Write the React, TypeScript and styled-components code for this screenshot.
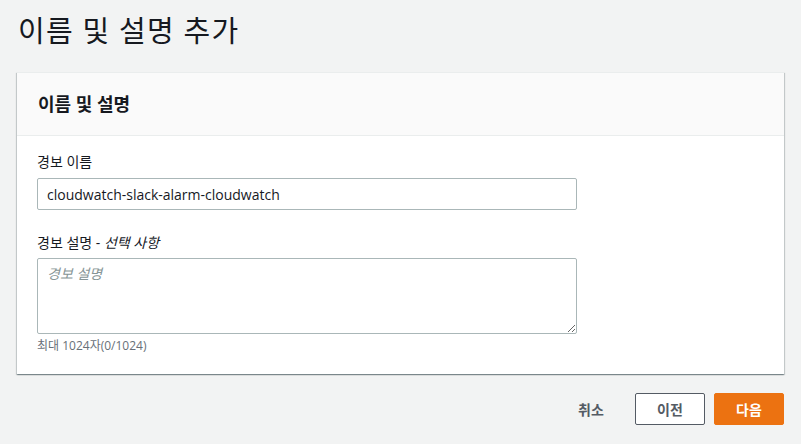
import React from "react";
import styled, { createGlobalStyle } from "styled-components";

const Global = createGlobalStyle`
	html, body {
		margin: 0;
		padding: 0;
		background: #f2f3f3;
	}
	body {
		font-family: "Open Sans", "Noto Sans CJK KR", sans-serif;
		color: #16191f;
	}
	* {
		box-sizing: border-box;
	}
`;

const Page = styled.div`
	padding: 10px 17px 0 17px;
	width: 801px;
	height: 444px;
`;

const Title = styled.h1`
	margin: 0 0 20px 1px;
	font-size: 29px;
	font-weight: 400;
	line-height: 42px;
	letter-spacing: 1.2px;
`;

const Card = styled.div`
	background: #fff;
	box-shadow: 0 1px 1px 0 rgba(0, 28, 36, 0.3), 1px 1px 1px 0 rgba(0, 28, 36, 0.15),
		-1px 1px 1px 0 rgba(0, 28, 36, 0.15);
	border-top: 1px solid #eaeded;
`;

const CardHeader = styled.div`
	background: #fafafa;
	border-bottom: 1px solid #eaeded;
	height: 63px;
	padding: 0 21px;
	display: flex;
	align-items: center;
`;

const CardTitle = styled.h2`
	margin: 0;
	font-size: 18px;
	font-weight: 700;
	line-height: 24px;
`;

const CardBody = styled.div`
	padding: 15px 20px 20px 20px;
	display: flex;
	flex-direction: column;
`;

const Field = styled.div<{ $gap?: number }>`
	display: flex;
	flex-direction: column;
	margin-bottom: ${(p) => p.$gap ?? 0}px;
`;

const Label = styled.label`
	font-size: 14px;
	line-height: 22px;
	margin-bottom: 4px;
	i {
		font-style: italic;
	}
`;

const Input = styled.input`
	width: 540px;
	height: 32px;
	margin-top: 1px;
	border: 1px solid #aab7b8;
	border-radius: 2px;
	padding: 0 9px;
	font-family: inherit;
	font-size: 14px;
	color: #16191f;
	outline: none;
`;

const TextArea = styled.textarea`
	width: 540px;
	height: 76px;
	border: 1px solid #aab7b8;
	border-radius: 2px;
	padding: 4px 9px;
	font-family: inherit;
	font-size: 14px;
	color: #16191f;
	resize: vertical;
	outline: none;
	&::placeholder {
		color: #879596;
		font-style: italic;
	}
`;

const Hint = styled.div`
	font-size: 12px;
	line-height: 16px;
	color: #687078;
	margin-top: 4px;
`;

const Actions = styled.div`
	display: flex;
	justify-content: flex-end;
	align-items: center;
	gap: 9px;
	margin-top: 19px;
`;

const Button = styled.button<{ $variant: "link" | "normal" | "primary" }>`
	height: 32px;
	min-width: 70px;
	padding: 0 18px;
	font-family: inherit;
	font-size: 14px;
	font-weight: 700;
	border-radius: 2px;
	cursor: pointer;
	border: 1px solid
		${(p) =>
			p.$variant === "primary" ? "#ec7211" : p.$variant === "normal" ? "#545b64" : "transparent"};
	background: ${(p) => (p.$variant === "primary" ? "#ec7211" : p.$variant === "normal" ? "#fff" : "transparent")};
	color: ${(p) => (p.$variant === "primary" ? "#fff" : "#545b64")};
`;

export default function App() {
	return (
		<Page>
			<Global />
			<Title>이름 및 설명 추가</Title>
			<Card>
				<CardHeader>
					<CardTitle>이름 및 설명</CardTitle>
				</CardHeader>
				<CardBody>
					<Field $gap={22}>
						<Label>경보 이름</Label>
						<Input defaultValue="cloudwatch-slack-alarm-cloudwatch" />
					</Field>
					<Field>
						<Label>
							경보 설명 - <i>선택 사항</i>
						</Label>
						<TextArea placeholder="경보 설명" />
						<Hint>최대 1024자(0/1024)</Hint>
					</Field>
				</CardBody>
			</Card>
			<Actions>
				<Button $variant="link">취소</Button>
				<Button $variant="normal">이전</Button>
				<Button $variant="primary">다음</Button>
			</Actions>
		</Page>
	);
}
